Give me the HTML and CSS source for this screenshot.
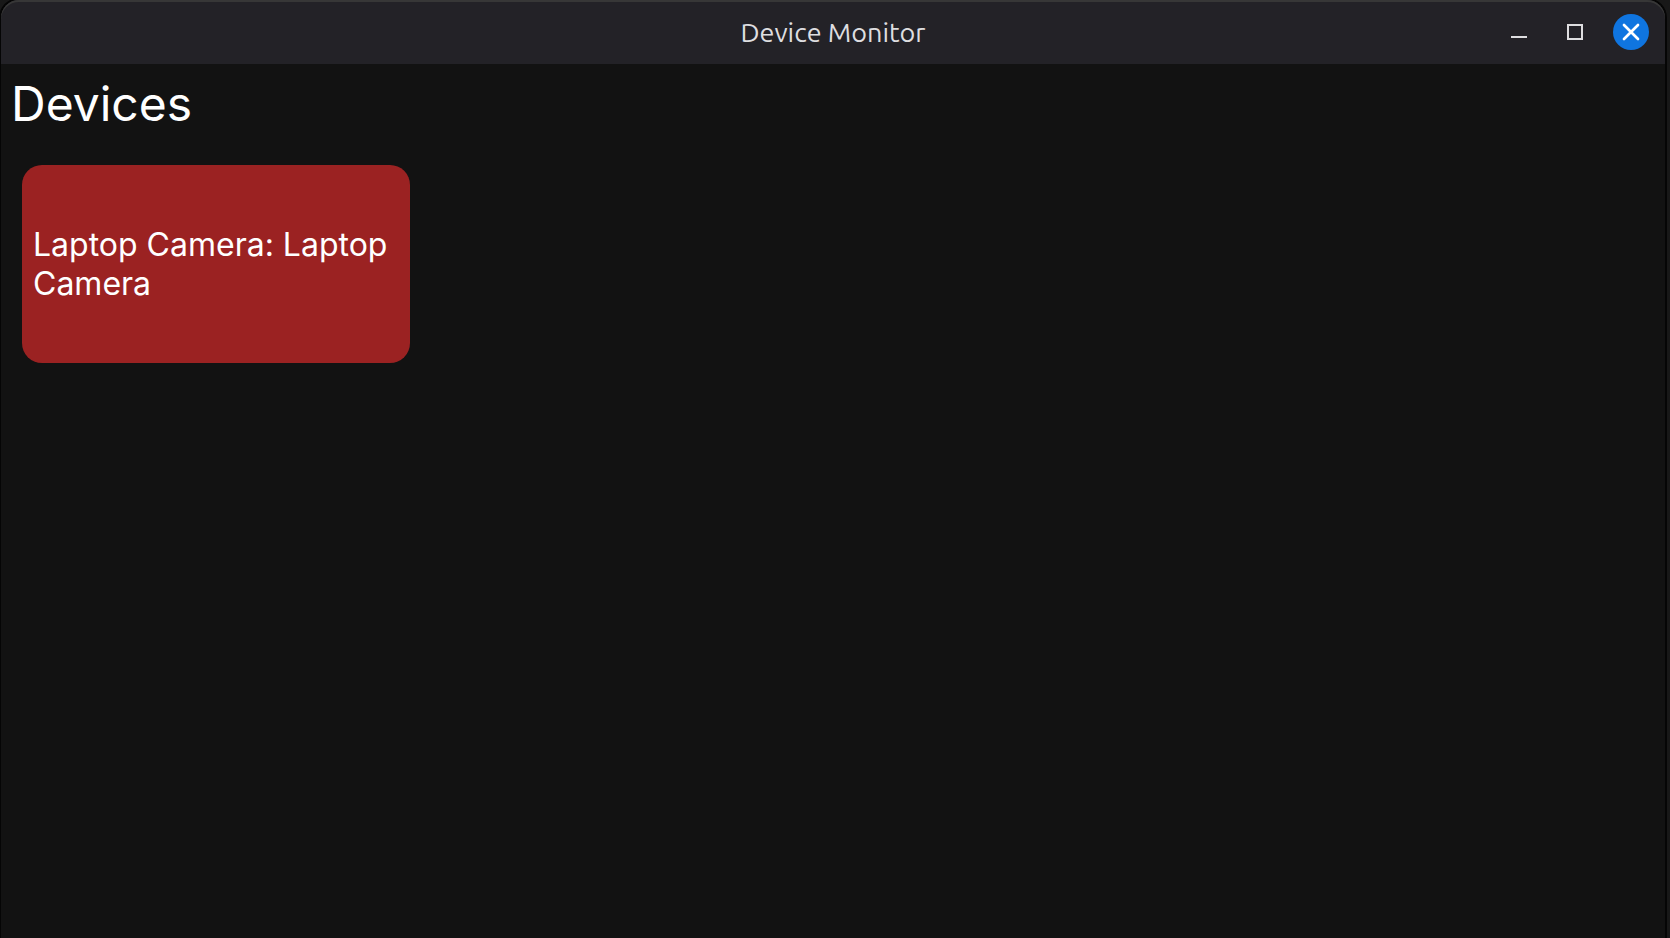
FILE: index.html
```html
<!DOCTYPE html>
<html lang="en">
<head>
  <meta charset="UTF-8" />
  <meta name="viewport" content="width=device-width, initial-scale=1.0"/>
  <title>Device Monitor</title>
  <link rel="stylesheet" href="styles.css">
</head>
<body>
  <div class="window">
    <header class="titlebar">
      <div class="title">Device Monitor</div>
      <div class="controls">
        <button type="button" class="control" aria-label="Minimize">
          <svg width="36" height="36" viewBox="0 0 36 36"><path d="M10 23h16" stroke="#dedee0" stroke-width="2" /></svg>
        </button>
        <button type="button" class="control" aria-label="Maximize">
          <svg width="36" height="36" viewBox="0 0 36 36"><rect x="11" y="11" width="14" height="14" fill="none" stroke="#dedee0" stroke-width="2" /></svg>
        </button>
        <button type="button" class="control close" aria-label="Close">
          <svg width="36" height="36" viewBox="0 0 36 36"><path d="M11 11l14 14M25 11L11 25" stroke="#fff" stroke-width="2.7" stroke-linecap="round" /></svg>
        </button>
      </div>
    </header>
    <main class="content">
      <h1>Devices</h1>
      <div class="devices">
        <div class="device">Laptop Camera: Laptop Camera</div>
      </div>
    </main>
  </div>
</body>
</html>
```
FILE: styles.css
```css
* {
  box-sizing: border-box;
}
body {
  margin: 0;
  height: 100vh;
  padding: 0 5px 0 1px;
  background-color: #181818;
  color: #fff;
  font-family: Inter, sans-serif;
  overflow: hidden;
}
.window {
  display: flex;
  flex-direction: column;
  height: 100%;
  border-radius: 18px 18px 0 0;
  background-color: #121212;
  box-shadow: 0 0 0 2px #050505;
}
.titlebar {
  display: grid;
  grid-template-columns: 1fr auto 1fr;
  align-items: center;
  height: 64px;
  padding: 0 16px;
  border-radius: 18px 18px 0 0;
  background-color: #232227;
  box-shadow: inset 0 2px 0 #373737;
}
.title {
  grid-column: 2;
  color: #dedee0;
  font-family: Ubuntu, "Noto Sans", sans-serif;
  font-size: 27px;
}
.controls {
  display: flex;
  justify-content: flex-end;
  gap: 20px;
}
.control {
  width: 36px;
  height: 36px;
  padding: 0;
  border: none;
  border-radius: 50%;
  background: none;
  cursor: pointer;
}
.control svg {
  display: block;
}
.close {
  background-color: #0f75e0;
}
.content {
  flex: 1;
  padding: 11px 10px;
}
h1 {
  margin: 0;
  font-size: 48px;
  font-weight: 400;
  line-height: 58px;
}
.devices {
  display: flex;
  flex-wrap: wrap;
  gap: 20px;
  padding: 32px 11px;
}
.device {
  display: flex;
  align-items: center;
  width: 388px;
  min-height: 198px;
  padding: 11px;
  border-radius: 20px;
  background-color: #9b2222;
  font-size: 32px;
  line-height: 39px;
}
```
